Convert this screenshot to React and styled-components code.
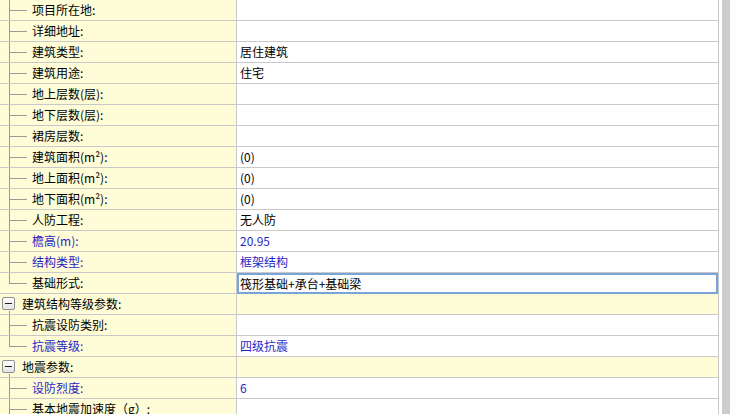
import React from 'react';
import styled, { createGlobalStyle, css } from 'styled-components';

const GlobalStyle = createGlobalStyle`
	html,
	body {
		margin: 0;
		padding: 0;
		background: #ffffff;
		overflow: hidden;
	}
	body {
		font-family: 'Noto Sans CJK SC', 'Microsoft YaHei', sans-serif;
		font-size: 12px;
		color: #000000;
	}
`;

// colours
const YELLOW = '#fffcd8';
const LINE = '#c9c9c9';
const TREE = '#9a9a9a';
const BLUE = '#1f1fc4';

// layout
const Frame = styled.div`
	display: flex;
	height: 414px;
	overflow: hidden;
`;
const Grid = styled.div`
	width: 719px;
	border-right: 1px solid ${LINE};
	box-sizing: border-box;
`;
const ScrollThumb = styled.div`
	width: 8px;
	margin-left: 3px;
	background: #cdcdcd;
`;

const Row = styled.div`
	display: flex;
	height: 20px;
	border-bottom: 1px solid ${LINE};
	background: ${(p) => (p.$group ? YELLOW : '#ffffff')};
`;
const LabelCell = styled.div`
	width: 236px;
	flex: none;
	display: flex;
	align-items: center;
	background: ${YELLOW};
	border-right: 1px solid ${LINE};
	color: ${(p) => (p.$blue ? BLUE : '#000000')};
	line-height: 20px;
	white-space: nowrap;
	overflow: hidden;
`;
const ValueCell = styled.div`
	flex: 1;
	display: flex;
	align-items: center;
	padding-left: 3px;
	line-height: 20px;
	color: ${(p) => (p.$blue ? BLUE : '#000000')};
	white-space: nowrap;
	${(p) =>
		p.$selected &&
		css`
			box-shadow: inset 0 0 0 2px #78a4d8;
			margin-bottom: -1px;
			height: 21px;
		`}
`;

// tree connectors
const Connector = styled.span`
	position: relative;
	width: 32px;
	align-self: stretch;
	flex: none;

	&::before {
		content: '';
		position: absolute;
		left: 9px;
		top: 0;
		width: 1px;
		height: ${(p) => (p.$last ? '10px' : '21px')};
		background: ${TREE};
	}
	&::after {
		content: '';
		position: absolute;
		left: 9px;
		top: 10px;
		width: 18px;
		height: 1px;
		background: ${TREE};
	}
`;
const GroupToggle = styled.span`
	position: relative;
	align-self: stretch;
	width: 22px;
	flex: none;

	&::after {
		content: '';
		position: absolute;
		left: 9px;
		top: 17px;
		width: 1px;
		height: 4px;
		background: ${TREE};
	}
`;
const MinusBox = styled.span`
	position: absolute;
	left: 2px;
	top: 3px;
	width: 11px;
	height: 11px;
	border: 1px solid #8f8f8f;
	border-radius: 2px;
	background: linear-gradient(#ffffff, #e4e4e4);

	&::before {
		content: '';
		position: absolute;
		left: 2px;
		top: 5px;
		width: 7px;
		height: 1px;
		background: #202020;
	}
`;

const rows = [
	{ label: '项目所在地:' },
	{ label: '详细地址:' },
	{ label: '建筑类型:', value: '居住建筑' },
	{ label: '建筑用途:', value: '住宅' },
	{ label: '地上层数(层):' },
	{ label: '地下层数(层):' },
	{ label: '裙房层数:' },
	{ label: '建筑面积(m²):', value: '(0)' },
	{ label: '地上面积(m²):', value: '(0)' },
	{ label: '地下面积(m²):', value: '(0)' },
	{ label: '人防工程:', value: '无人防' },
	{ label: '檐高(m):', value: '20.95', blue: true },
	{ label: '结构类型:', value: '框架结构', blue: true },
	{ label: '基础形式:', value: '筏形基础+承台+基础梁', last: true, selected: true },
	{ label: '建筑结构等级参数:', group: true },
	{ label: '抗震设防类别:' },
	{ label: '抗震等级:', value: '四级抗震', blue: true, last: true },
	{ label: '地震参数:', group: true },
	{ label: '设防烈度:', value: '6', blue: true },
	{ label: '基本地震加速度（g）:' },
];

// markup
const App = () => {
	return (
		<>
			<GlobalStyle />
			<Frame>
				<Grid>
					{rows.map((r) => (
						<Row key={r.label} $group={r.group}>
							<LabelCell $blue={r.blue}>
								{r.group ? (
									<GroupToggle>
										<MinusBox />
									</GroupToggle>
								) : (
									<Connector $last={r.last} />
								)}
								{r.label}
							</LabelCell>
							<ValueCell $blue={r.blue} $selected={r.selected}>
								{r.value}
							</ValueCell>
						</Row>
					))}
				</Grid>
				<ScrollThumb />
			</Frame>
		</>
	);
};

export default App;
